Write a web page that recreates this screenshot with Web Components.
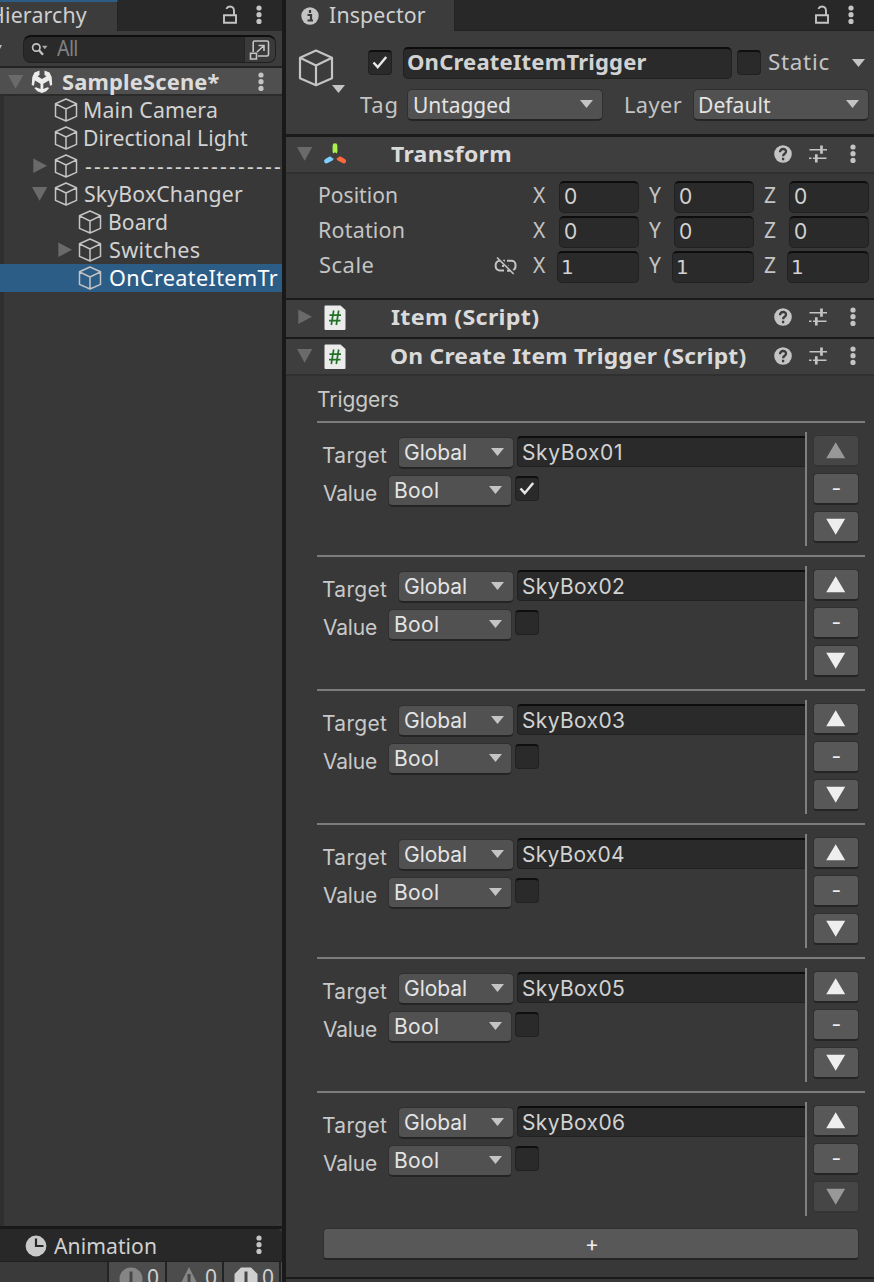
<!DOCTYPE html>
<html lang="en">
<head>
<meta charset="utf-8">
<title>Editor</title>
<style>
html,body{margin:0;height:100%;background:#191919;overflow:hidden}
</style>
</head>
<body>
<editor-window></editor-window>
<script>
const define = (name, render, ready) => customElements.define(name, class extends HTMLElement {
  connectedCallback() {
    if (this.shadowRoot) return;
    this.attachShadow({ mode: 'open' }).innerHTML = render(this);
    if (ready) ready(this);
  }
});
const attr = (el, n, d = '') => el.getAttribute(n) ?? d;

/* Label whose ink spans exactly `w` pixels: glyphs are widened first, tracking takes the rest */
const ctx = document.createElement('canvas').getContext('2d');
define('ui-text', el => `<style>
:host{display:block;flex:none;width:${attr(el, 'w')}px;white-space:pre;line-height:28px}
:host([b]){font-weight:700}
:host([inter]){font-family:Inter,sans-serif}
:host([dj]){font-family:"DejaVu Sans",sans-serif;font-size:20px}
span{display:block;width:max-content;transform-origin:0 50%}
</style><span>${attr(el, 't')}</span>`, el => {
  const cs = getComputedStyle(el), t = attr(el, 't'), w = +attr(el, 'w');
  ctx.font = `${cs.fontWeight} ${cs.fontSize} ${cs.fontFamily}`;
  const m = ctx.measureText(t), s = el.shadowRoot.querySelector('span');
  const ink = m.actualBoundingBoxLeft + m.actualBoundingBoxRight;
  if (t.length < 2 || t[0] === '-') {
    s.style.marginLeft = m.actualBoundingBoxLeft + 'px';
    if (t.length > 1) s.style.letterSpacing = (w - ink) / (t.length - 1) + 'px';
    return;
  }
  const part = el.hasAttribute('inter') ? 0 : el.hasAttribute('b') ? .8 : .5;
  const k = 1 + (w / ink - 1) * part;
  s.style.transform = `scaleX(${k})`;
  s.style.marginLeft = m.actualBoundingBoxLeft * k + 'px';
  s.style.letterSpacing = (w / k - ink) / (t.length - 1) + 'px';
});

const icons = {
  dots: [6, 20, '<g fill="#c4c4c4"><circle cx="3" cy="3" r="2.6"/><circle cx="3" cy="9.7" r="2.6"/><circle cx="3" cy="16.4" r="2.6"/></g>'],
  lock: [16, 20, '<path d="M2 10.2h12v7.5H2zM4.3 3.8C5.2 2 6.300 1.500 8 1.500c2.600 0 4 1.800 4 4.300V10" fill="none" stroke="#c4c4c4" stroke-width="1.900"/>'],
  cube: [24, 24, '<path d="M12 1l10.500 4.800v12.600L12 23 1.500 18.400V5.800zM1.500 5.800L12 11l10.500-5.200M12 11v12" fill="none" stroke="#c4c4c4" stroke-width="1.500" stroke-linejoin="round"/>'],
  bigcube: [36, 38, '<path d="M18 1.500l16 7.200v20.600L18 36.200 2 29.300V8.700zM2 8.700l16 7.800 16-7.800M18 16.500v19.700" fill="none" stroke="#c4c4c4" stroke-width="2.200" stroke-linejoin="round"/>'],
  right: [16, 16, '<path d="M1.300 .6v14.500L15 7.800z" fill="#6a6a6a"/>'],
  down: [16, 16, '<path d="M0 1h15.300L7.600 14.800z" fill="#6a6a6a"/>'],
  caret: [13, 8, '<path d="M0 0h13L6.500 8z" fill="#c4c4c4"/>'],
  search: [17, 15, '<circle cx="5.300" cy="5.500" r="3.700" fill="none" stroke="#c4c4c4" stroke-width="1.700"/><path d="M8 8.200l4 4.600" stroke="#c4c4c4" stroke-width="2.300"/><path d="M11 3.800h5.500l-2.700 3.500z" fill="#a8a8a8"/>'],
  popup: [22, 22, '<path d="M4.200 13V3.500a1.500 1.500 0 0 1 1.500-1.500H18a1.500 1.500 0 0 1 1.500 1.500v12A1.500 1.500 0 0 1 18 17H9M1.500 14.200H7.500V20H1.500zM8 13l7-6.500M9.500 6.500H15v5.500" fill="none" stroke="#c4c4c4" stroke-width="1.600"/>'],
  unity: [22, 24, '<path d="M3.500 2.500L8.500.5V5L6.500 6.200 11 9l4.500-2.800L13.500 5V.5l5 2 2.200 4.500.5 8-2.200.7-1-5.200-5.700 3.300V19l4.200-1.800 1.700.7-3 3.300L11 23l-4.700-1.800-3-3.300 1.700-.7L9.500 19v-5.200L3.900 10.500l-1 5.200L.7 15 1.300 7z" fill="#ececec"/>'],
  info: [18, 18, '<circle cx="9" cy="9" r="8.700" fill="#c4c4c4"/><path d="M9 3v3M6.500 8H10v5M6.500 13.500h5.500" stroke="#3a3a3a" stroke-width="2.200" fill="none"/>'],
  help: [18, 18, '<circle cx="9" cy="9" r="8.800" fill="#c4c4c4"/><path d="M6 7.200C5.800 3 12.300 3 12 6.800 11.900 8.800 9.100 8.800 9.100 11.200M9.100 12.800v2.400" stroke="#3b3b3b" stroke-width="2.300" fill="none"/>'],
  sliders: [18, 18, '<path d="M.5 4.800H12M14 4.800h4M0 13.200h2.500M4 13.200h2M8 13.200h9.500" stroke="#c4c4c4" stroke-width="1.600"/><path d="M12.500.5v8.300M7.300 9.200v8.300" stroke="#c4c4c4" stroke-width="2.700"/>'],
  axes: [24, 24, '<g stroke-linecap="round" stroke-width="4.800"><path d="M12 3.700v6" stroke="#a8f14b"/><path d="M8.300 16.300l-4.800 2.700" stroke="#7dd0ff"/><path d="M15.900 16.300l4.800 2.700" stroke="#ff6a3d"/></g><path d="M12 10.300l5 4-3.300 2.200h-3.600L7 14.300z" fill="#3e3e3e"/>'],
  script: [22, 25, '<path d="M1.500.5h15L21.500 5v19a1 1 0 0 1-1 1h-19a1 1 0 0 1-1-1V1.500a1 1 0 0 1 1-1z" fill="#ececec"/><path d="M9.700 5.500L7.300 20M14.700 5.500L12.300 20M5.500 10.200h11.500M5 15.600h11.500" stroke="#22702a" stroke-width="1.700"/>'],
  link: [23, 20, '<path d="M7 4.800H5.600A4 4 0 0 0 1.700 9v1.500a4 4 0 0 0 4 4H10M9 4.800h2M13 4.800h4.500a4 4 0 0 1 4 4v1.800a4 4 0 0 1-3 3.800M13 14.700h3M8 10h2M13 10h2" fill="none" stroke="#c4c4c4" stroke-width="2"/><path d="M3.500 1L20.500 17" stroke="#3a3a3a" stroke-width="2.500"/><path d="M3 1.500L19.700 18" stroke="#c4c4c4" stroke-width="1.600"/>'],
  check: [18, 16, '<path d="M2.500 7.500l4.200 4.700L15.200 2" fill="none" stroke="#e8e8e8" stroke-width="2.500"/>'],
  clock: [22, 22, '<circle cx="11" cy="11" r="10.400" fill="#c9c9c9"/><path d="M11 3.500V11h7.500" stroke="#282828" stroke-width="2.200" fill="none"/>'],
  up: [20, 17, '<path d="M9.700 .3L19.200 16.300H.2z" fill="currentColor"/>'],
  dn: [20, 17, '<path d="M.2.700h19L9.700 16.700z" fill="currentColor"/>'],
  msg: [24, 24, '<circle cx="12" cy="12" r="11.500" fill="#858585"/><path d="M12 4.500v11" stroke="#474747" stroke-width="3"/>'],
  warn: [24, 24, '<path d="M12 0l11 22H1z" fill="#858585"/><path d="M12 7v9" stroke="#474747" stroke-width="3"/>'],
  err: [24, 24, '<path d="M7 .5h10L23.500 7v10L17 23.500H7L.5 17V7z" fill="#cfcfcf"/><path d="M12 4.500v11" stroke="#474747" stroke-width="3"/>']
};
define('ui-icon', el => {
  const [w, h, body] = icons[attr(el, 'n')];
  return `<style>:host{display:block;flex:none;width:${w}px;height:${h}px}svg{display:block}</style><svg width="${w}" height="${h}" viewBox="0 0 ${w} ${h}">${body}</svg>`;
});

define('ui-check', el => `<style>
:host{display:flex;flex:none;box-sizing:border-box;width:24px;height:25px;align-items:center;justify-content:center;background:#2a2a2a;border:1px solid #212121;border-top:2px solid #0f0f0f;border-radius:4px}
</style>${el.hasAttribute('on') ? '<ui-icon n="check"></ui-icon>' : ''}`);

define('ui-field', () => `<style>
:host{display:flex;flex:none;box-sizing:border-box;align-items:center;height:32px;padding-left:5px;background:#2a2a2a;border:1px solid #212121;border-top:2px solid #0d0d0d;border-radius:5px;color:#d2d2d2}
</style><slot></slot>`);

define('ui-drop', () => `<style>
:host{display:flex;flex:none;box-sizing:border-box;align-items:center;justify-content:space-between;height:32px;padding:0 9px 0 6px;background:#515151;border:1px solid #303030;border-bottom:2px solid #242424;border-radius:5px;color:#e4e4e4}
ui-icon{margin-top:-1px}
::slotted(ui-text[inter]){margin-top:1px}
</style><slot></slot><ui-icon n="caret"></ui-icon>`);

define('ui-button', () => `<style>
:host{display:flex;flex:none;box-sizing:border-box;align-items:center;justify-content:center;height:32px;background:#585858;border:1px solid #303030;border-bottom:2px solid #242424;border-radius:4px;color:#eee}
:host([off]){background:#464646;border-color:#343434;color:#989898}
</style><slot></slot>`);

define('tree-row', el => {
  const d = +attr(el, 'depth', 1);
  return `<style>
:host{display:flex;align-items:center;box-sizing:border-box;height:28px;padding-left:${d === 2 ? 57 : 32}px;overflow:hidden;color:#d2d2d2}
:host([sel]){background:#2c5d87;color:#fff}
.a{width:16px;height:16px;margin-right:${d === 2 ? 5 : 6}px}
ui-text{margin-left:${d === 2 ? 8 : 7}px}
</style><div class="a">${attr(el, 'arrow') ? `<ui-icon n="${attr(el, 'arrow')}"></ui-icon>` : ''}</div><ui-icon n="cube"></ui-icon><ui-text t="${attr(el, 't')}" w="${attr(el, 'w')}"></ui-text>`;
});

define('hierarchy-panel', () => `<style>
:host{display:flex;flex-direction:column;width:282px;height:1226px;background:#383838;overflow:hidden}
.tabs{display:flex;height:31px;flex:none;background:#282828;align-items:center}
.tab{box-sizing:border-box;width:118px;height:31px;background:#3c3c3c;border-top:2px solid #2c5d87;border-right:1px solid #232323;overflow:hidden;color:#cfcfcf}
.tab ui-text{margin:-1px 0 0 -9px}
.tabs ui-icon{margin-top:-2px}
.bar{box-sizing:border-box;height:37px;flex:none;background:#3c3c3c;border-bottom:2px solid #232323;display:flex;padding:4px 0 0 0}
.mini{width:2px;height:4px;background:#bbb;margin:10px 21px 0 0;clip-path:polygon(0 0,100% 0,0 100%)}
.search{box-sizing:border-box;width:253px;height:28px;border:1px solid #202020;border-top:2px solid #0f0f0f;border-radius:8px;background:#2a2a2a;display:flex;align-items:center;padding-left:7px;color:#818181;overflow:hidden}
.search ui-text{margin:-3px 0 0 9px}
.pop{margin-left:auto;width:30px;height:28px;background:#3a3a3a;border-left:1px solid #262626;display:flex;align-items:center;justify-content:center}
.scene{box-sizing:border-box;height:28px;flex:none;background:#4f4f4f;border-bottom:2px solid #2b2b2b;display:flex;align-items:center;color:#dcdcdc;padding:1px 0 0 8px}
.tree{flex:1;background:linear-gradient(90deg,#2f2f2f 4px,#383838 4px)}
</style>
<div class="tabs"><div class="tab"><ui-text t="Hierarchy" w="96"></ui-text></div><ui-icon n="lock" style="margin-left:104px"></ui-icon><ui-icon n="dots" style="margin-left:18px"></ui-icon></div>
<div class="bar"><div class="mini"></div><div class="search"><ui-icon n="search"></ui-icon><ui-text t="All" w="20"></ui-text><div class="pop"><ui-icon n="popup"></ui-icon></div></div></div>
<div class="scene"><ui-icon n="down"></ui-icon><ui-icon n="unity" style="margin-left:7px"></ui-icon><ui-text b t="SampleScene*" w="157" style="margin-left:9px"></ui-text><ui-icon n="dots" style="margin-left:39px"></ui-icon></div>
<div class="tree">
<tree-row t="Main Camera" w="132"></tree-row>
<tree-row t="Directional Light" w="163"></tree-row>
<tree-row arrow="right" t="----------------------" w="195"></tree-row>
<tree-row arrow="down" t="SkyBoxChanger" w="158"></tree-row>
<tree-row depth="2" t="Board" w="57"></tree-row>
<tree-row depth="2" arrow="right" t="Switches" w="90"></tree-row>
<tree-row depth="2" sel t="OnCreateItemTr" w="168"></tree-row>
</div>`);

define('animation-panel', () => `<style>
:host{display:block;width:282px;height:53px;margin-top:3px;background:#3a3a3a;overflow:hidden;color:#d0d0d0}
.tabs{box-sizing:border-box;display:flex;align-items:center;height:33px;background:#282828;border-bottom:1px solid #1f1f1f;border-top-right-radius:5px;padding:2px 0 0 25px}
.bar{display:flex;height:20px;padding-left:107px}
.c{box-sizing:border-box;display:flex;flex:none;height:20px;width:58px;border-left:2px solid #232323;background:#4c4c4c;padding:5px 0 0 10px;overflow:hidden}
.c ui-text{margin:-4px 0 0 5px}
</style>
<div class="tabs"><ui-icon n="clock"></ui-icon><ui-text t="Animation" w="102" style="margin-left:7px"></ui-text><ui-icon n="dots" style="margin:-2px 0 0 100px"></ui-icon></div>
<div class="bar"><div class="c"><ui-icon n="msg"></ui-icon><ui-text t="0" w="11"></ui-text></div><div class="c" style="width:57px"><ui-icon n="warn"></ui-icon><ui-text t="0" w="11"></ui-text></div><div class="c" style="width:57px"><ui-icon n="err"></ui-icon><ui-text t="0" w="11"></ui-text></div><div class="c"></div></div>`);

define('component-header', el => `<style>
:host{display:flex;box-sizing:border-box;align-items:center;height:37px;padding:0 0 3px 11px;background:#3e3e3e;color:#dadada}
:host([open]){border-bottom:2px solid #303030;padding-bottom:1px}
.i{width:24px;display:flex;justify-content:center;margin:0 44px 0 10px}
.r{margin-left:auto;display:flex;align-items:center;padding-right:18px}
.r *+*{margin-left:17px}
</style><ui-icon n="${el.hasAttribute('open') ? 'down' : 'right'}"></ui-icon><div class="i"><ui-icon n="${attr(el, 'icon')}"></ui-icon></div><ui-text b t="${attr(el, 't')}" w="${attr(el, 'w')}"></ui-text><div class="r"><ui-icon n="help"></ui-icon><ui-icon n="sliders"></ui-icon><ui-icon n="dots" style="margin-left:23px"></ui-icon></div>`);

define('vector-row', el => {
  const one = attr(el, 'v') === '1', wide = one ? 82 : 80;
  const num = one ? '<ui-text dj t="1" w="10"></ui-text>' : '<ui-text inter t="0" w="12"></ui-text>';
  return `<style>
:host{display:flex;align-items:center;height:35px;color:#c4c4c4;padding-left:34px}
.lab{width:174px;flex:none;margin-top:-3px}
.lk{width:25px;flex:none;margin-top:-2px}
ui-field{margin-left:auto}
.cell{width:105px;display:flex;align-items:center;flex:none;margin-right:10px}
.cell>ui-text{margin-top:-3px}
</style><div class="lab"><ui-text t="${attr(el, 't')}" w="${attr(el, 'w')}"></ui-text></div><div class="lk">${one ? '<ui-icon n="link"></ui-icon>' : ''}</div>
${['X', 'Y', 'Z'].map((l, i) => `<div class="cell" style="padding-left:${[14, 0, 0][i]}px;width:${[106, 105, 105][i]}px"><ui-text t="${l}" w="13"></ui-text><ui-field style="width:${wide}px">${num}</ui-field></div>`).join('')}`;
});

define('trigger-row', el => `<style>
:host{display:flex;box-sizing:border-box;height:134px;border-top:2px solid #7c7c7c;padding-top:9px;color:#c8c8c8}
.f{box-sizing:border-box;width:488px;padding-top:4px;flex:none}
.l{display:flex;height:38px;align-items:flex-start;padding-left:6px}
.l>ui-text{margin-top:6px}
.l>ui-drop{margin:1px 0 0 11px}
.v{width:2px;height:114px;background:#808080;flex:none}
.btns{display:flex;flex-direction:column;gap:6px;padding:3px 0 0 6px}
.btns ui-button{width:46px}
</style>
<div class="f">
<div class="l"><ui-text inter t="Target" w="64"></ui-text><ui-drop style="width:116px"><ui-text inter t="Global" w="61"></ui-text></ui-drop><ui-field style="width:289px;height:31px;margin:0 0 0 3px;border-radius:4px 0 0 4px"><ui-text inter t="${attr(el, 't')}" w="${attr(el, 'w', 101)}" style="margin-top:2px"></ui-text></ui-field></div>
<div class="l"><ui-text inter t="Value" w="54"></ui-text><ui-drop style="width:124px"><ui-text inter t="Bool" w="43"></ui-text></ui-drop><ui-check ${el.hasAttribute('on') ? 'on' : ''} style="margin:2px 0 0 3px"></ui-check></div>
</div>
<div class="v"></div>
<div class="btns"><ui-button ${el.hasAttribute('first') ? 'off' : ''}><ui-icon n="up"></ui-icon></ui-button><ui-button><ui-text inter t="-" w="7"></ui-text></ui-button><ui-button ${el.hasAttribute('last') ? 'off' : ''}><ui-icon n="dn"></ui-icon></ui-button></div>`);

define('inspector-panel', () => `<style>
:host{display:block;width:588px;height:1282px;background:#383838;overflow:hidden}
.tabs{display:flex;height:31px;background:#282828;align-items:center;box-shadow:inset 0 -1px #232323}
.tab{box-sizing:border-box;width:169px;height:31px;background:#3c3c3c;border-right:1px solid #232323;display:flex;align-items:center;padding-left:15px;color:#cfcfcf}
.head{box-sizing:border-box;height:106px;background:#3c3c3c;border-bottom:3px solid #1a1a1a;display:flex;color:#c4c4c4}
.obj{width:58px;padding:18px 0 0 12px;flex:none}
.row{display:flex;align-items:center}
.line{height:2px;background:#1a1a1a}
.tf{box-sizing:border-box;height:124px;padding-top:5px}
.tr{box-sizing:border-box;height:901px;padding:10px 9px 0 31px;color:#c8c8c8}
</style>
<div class="tabs"><div class="tab"><ui-icon n="info"></ui-icon><ui-text t="Inspector" w="97" style="margin:-2px 0 0 10px"></ui-text></div><ui-icon n="lock" style="margin:-2px 0 0 359px"></ui-icon><ui-icon n="dots" style="margin:-2px 0 0 18px"></ui-icon></div>
<div class="head"><div class="obj"><ui-icon n="bigcube"></ui-icon><ui-icon n="caret" style="margin:-2px 0 0 34px"></ui-icon></div>
<div><div class="row" style="height:32px;margin-top:16px"><ui-check on style="margin:-2px 0 0 12px"></ui-check><ui-field style="width:329px;margin-left:11px"><ui-text b t="OnCreateItemTrigger" w="239" style="margin:-4px 0 0 -1px"></ui-text></ui-field><ui-check style="margin:-2px 0 0 5px"></ui-check><ui-text t="Static" w="60" style="margin:-2px 0 0 8px"></ui-text><ui-icon n="caret" style="margin-left:23px"></ui-icon></div>
<div class="row" style="height:32px;margin-top:10px"><ui-text t="Tag" w="37" style="margin:-1px 0 0 4px"></ui-text><ui-drop style="width:196px;margin-left:10px"><ui-text t="Untagged" w="96"></ui-text></ui-drop><ui-text t="Layer" w="56" style="margin:-1px 0 0 23px"></ui-text><ui-drop style="width:176px;margin-left:11px"><ui-text t="Default" w="71"></ui-text></ui-drop></div></div></div>
<component-header open icon="axes" t="Transform" w="119"></component-header>
<div class="tf"><vector-row t="Position" w="77" v="0"></vector-row><vector-row t="Rotation" w="84" v="0"></vector-row><vector-row t="Scale" w="53" v="1"></vector-row></div>
<div class="line"></div>
<component-header icon="script" t="Item (Script)" w="148"></component-header>
<div class="line"></div>
<component-header open icon="script" t="On Create Item Trigger (Script)" w="355"></component-header>
<div class="tr"><ui-text inter t="Triggers" w="81" style="margin:0 0 7px 1px"></ui-text>
<trigger-row first on t="SkyBox01" w="98"></trigger-row><trigger-row t="SkyBox02"></trigger-row><trigger-row t="SkyBox03"></trigger-row><trigger-row t="SkyBox04"></trigger-row><trigger-row t="SkyBox05"></trigger-row><trigger-row last t="SkyBox06"></trigger-row>
<ui-button style="width:536px;margin:3px 0 0 6px"><ui-text inter t="+" w="10"></ui-text></ui-button></div>
<div class="line"></div>`);

define('editor-window', () => `<style>
:host{display:flex;gap:4px;width:874px;height:1282px;overflow:hidden;background:#191919;font:21px/28px "Noto Sans",sans-serif}
</style><div><hierarchy-panel></hierarchy-panel><animation-panel></animation-panel></div><inspector-panel></inspector-panel>`);
</script>
</body>
</html>
